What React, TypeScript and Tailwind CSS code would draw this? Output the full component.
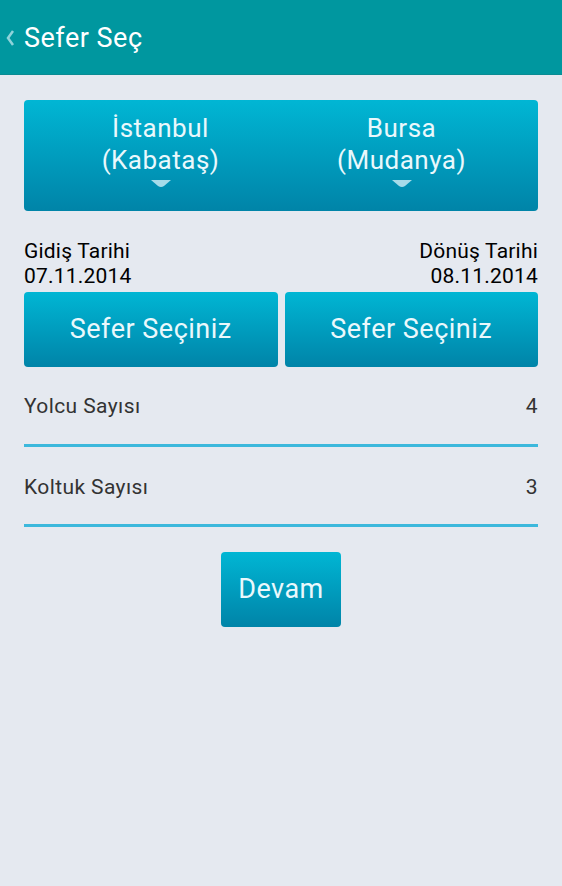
import React from "react";

function Caret() {
  return (
    <svg width="20" height="8" viewBox="0 0 20 8" className="mt-[4px]">
      <path d="M0 0 H20 L13 6 Q10 8 7 6 Z" fill="#a6dbe9" />
    </svg>
  );
}

function CityBox({ city, port }: { city: string; port: string }) {
  return (
    <div className="flex flex-1 flex-col items-center pt-[12px] tracking-[0.5px]">
      <span className="leading-[32px]">{city}</span>
      <span className="leading-[32px]">{port}</span>
      <Caret />
    </div>
  );
}

function BlueButton({ label, className }: { label: string; className?: string }) {
  return (
    <button
      className={
        "flex items-center justify-center rounded-[4px] bg-gradient-to-b from-[#01b6d4] to-[#0084a8] text-[27px] tracking-[0.5px] text-[#eaf8fc] " +
        (className ?? "")
      }
    >
      {label}
    </button>
  );
}

function CountRow({ label, value, className }: { label: string; value: string; className?: string }) {
  return (
    <div
      className={
        "flex h-[80px] items-center justify-between border-b-[3px] border-[#3cb8dc] text-[21px] tracking-[0.4px] text-[#333333] " +
        (className ?? "")
      }
    >
      <span>{label}</span>
      <span>{value}</span>
    </div>
  );
}

export default function App() {
  return (
    <div className="flex h-[886px] w-[562px] flex-col bg-[#e5e9f0] font-['Roboto',sans-serif]">
      <div className="flex h-[75px] items-center bg-[#00979f] pl-[5px] pt-[2px] border-b border-[#0a8b93]">
        <svg width="10" height="18" viewBox="0 0 10 18" className="mr-[9px]">
          <polyline points="8,2 3,9 8,16" fill="none" stroke="#8fd3da" strokeWidth="2.5" />
        </svg>
        <span className="text-[27px] tracking-[0.5px] text-white">Sefer Seç</span>
      </div>

      <div className="flex flex-col px-[24px]">
        <div className="mt-[25px] flex h-[111px] rounded-[4px] bg-gradient-to-b from-[#01b6d4] to-[#0084a8] px-[16px] text-[26px] text-[#eaf8fc]">
          <CityBox city="İstanbul" port="(Kabataş)" />
          <CityBox city="Bursa" port="(Mudanya)" />
        </div>

        <div className="mt-[28px] flex justify-between text-[21px] leading-[25px] tracking-[0.2px] text-black">
          <div className="flex flex-col">
            <span>Gidiş Tarihi</span>
            <span>07.11.2014</span>
          </div>
          <div className="flex flex-col items-end">
            <span>Dönüş Tarihi</span>
            <span>08.11.2014</span>
          </div>
        </div>

        <div className="mt-[3px] flex gap-[7px]">
          <BlueButton label="Sefer Seçiniz" className="h-[75px] flex-1" />
          <BlueButton label="Sefer Seçiniz" className="h-[75px] flex-1" />
        </div>

        <CountRow label="Yolcu Sayısı" value="4" className="pt-[3px]" />
        <CountRow label="Koltuk Sayısı" value="3" className="pt-[4px]" />

        <div className="mt-[25px] flex justify-center">
          <BlueButton label="Devam" className="h-[75px] w-[120px]" />
        </div>
      </div>
    </div>
  );
}
